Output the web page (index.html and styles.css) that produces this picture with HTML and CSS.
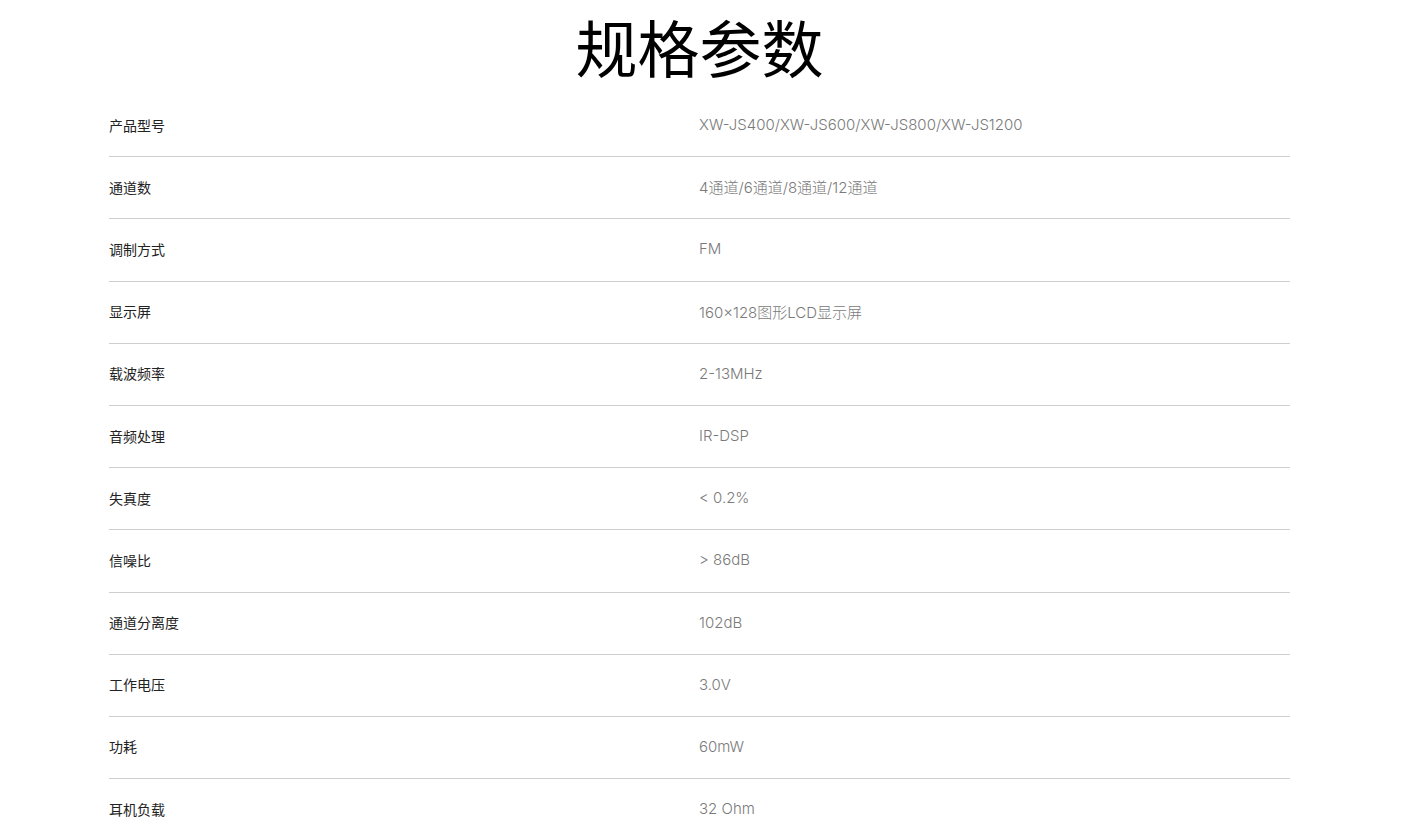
FILE: index.html
```html
<!DOCTYPE html>
<html lang="zh">
<head>
<meta charset="utf-8">
<title>规格参数</title>
<link rel="stylesheet" href="styles.css">
</head>
<body>
<section class="specs">
  <h1 class="specs-title">规格参数</h1>
  <div class="spec-table">
    <div class="spec-row"><div class="spec-label">产品型号</div><div class="spec-value">XW-JS400/XW-JS600/XW-JS800/XW-JS1200</div></div>
    <div class="spec-row"><div class="spec-label">通道数</div><div class="spec-value">4通道/6通道/8通道/12通道</div></div>
    <div class="spec-row"><div class="spec-label">调制方式</div><div class="spec-value">FM</div></div>
    <div class="spec-row"><div class="spec-label">显示屏</div><div class="spec-value">160×128图形LCD显示屏</div></div>
    <div class="spec-row"><div class="spec-label">载波频率</div><div class="spec-value">2-13MHz</div></div>
    <div class="spec-row"><div class="spec-label">音频处理</div><div class="spec-value">IR-DSP</div></div>
    <div class="spec-row"><div class="spec-label">失真度</div><div class="spec-value">&lt; 0.2%</div></div>
    <div class="spec-row"><div class="spec-label">信噪比</div><div class="spec-value">&gt; 86dB</div></div>
    <div class="spec-row"><div class="spec-label">通道分离度</div><div class="spec-value">102dB</div></div>
    <div class="spec-row"><div class="spec-label">工作电压</div><div class="spec-value">3.0V</div></div>
    <div class="spec-row"><div class="spec-label">功耗</div><div class="spec-value">60mW</div></div>
    <div class="spec-row"><div class="spec-label">耳机负载</div><div class="spec-value">32 Ohm</div></div>
  </div>
</section>
</body>
</html>
```

FILE: styles.css
```css
html, body {
  margin: 0;
  padding: 0;
  background: #ffffff;
}
body {
  font-family: "Noto Sans CJK SC", "Noto Sans", sans-serif;
  color: #111;
}
.specs {
  width: 1181px;
  margin: 0 0 0 109px;
}
.specs-title {
  margin: 0;
  height: 95px;
  display: flex;
  align-items: center;
  justify-content: center;
  font-size: 62px;
  font-weight: 400;
  color: #000;
  line-height: 1;
  padding-bottom: 4px;
  box-sizing: border-box;
}
.spec-table {
  display: flex;
  flex-direction: column;
}
.spec-row {
  display: grid;
  grid-template-columns: 590px 1fr;
  align-items: center;
  height: 62.2px;
  padding-bottom: 2px;
  box-sizing: border-box;
  border-bottom: 1px solid #cfcfcf;
}
.spec-label {
  font-size: 14px;
  font-weight: 400;
  color: #222;
}
.spec-value {
  font-family: "Inter", "Noto Sans CJK SC", sans-serif;
  font-size: 15px;
  font-weight: 300;
  color: #7a7a7a;
}
```
